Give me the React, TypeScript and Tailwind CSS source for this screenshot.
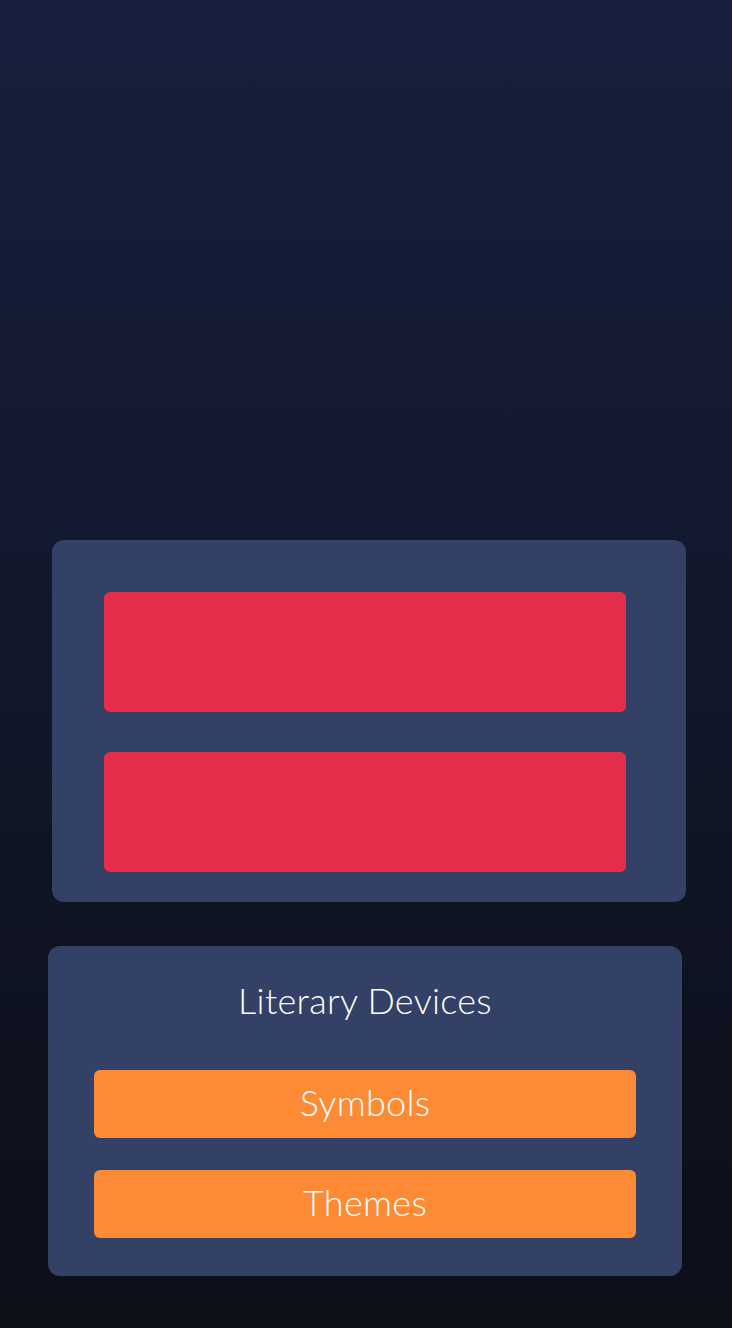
import React from "react";

const font = { fontFamily: "Lato, 'Noto Sans', sans-serif" };

const devices = ["Symbols", "Themes"];

const App = () => {
  return (
    <div
      className="min-h-[1328px] w-full bg-gradient-to-b from-[#171f3d] to-[#0c0f18] pt-[540px]"
      style={font}
    >
      <div className="ml-[52px] flex w-[634px] flex-col gap-[40px] rounded-[12px] bg-[#344166] pb-[30px] pl-[52px] pr-[60px] pt-[52px]">
        <div className="h-[120px] rounded-[6px] bg-[#e42e4b]" />
        <div className="h-[120px] rounded-[6px] bg-[#e42e4b]" />
      </div>

      <div className="ml-[48px] mt-[44px] flex w-[634px] flex-col items-center rounded-[12px] bg-[#344166] px-[46px] pb-[38px] pt-[32px]">
        <h2 className="text-[36px] font-light leading-[44px] tracking-[0.3px] text-white">Literary Devices</h2>
        <div className="mt-[48px] flex w-full flex-col gap-[32px]">
          {devices.map((d) => (
            <button
              key={d}
              className="h-[68px] w-full rounded-[6px] bg-[#fd8b35] pb-[4px] text-[36px] font-light leading-none tracking-[0.3px] text-white"
            >
              {d}
            </button>
          ))}
        </div>
      </div>
    </div>
  );
};

export default App;
